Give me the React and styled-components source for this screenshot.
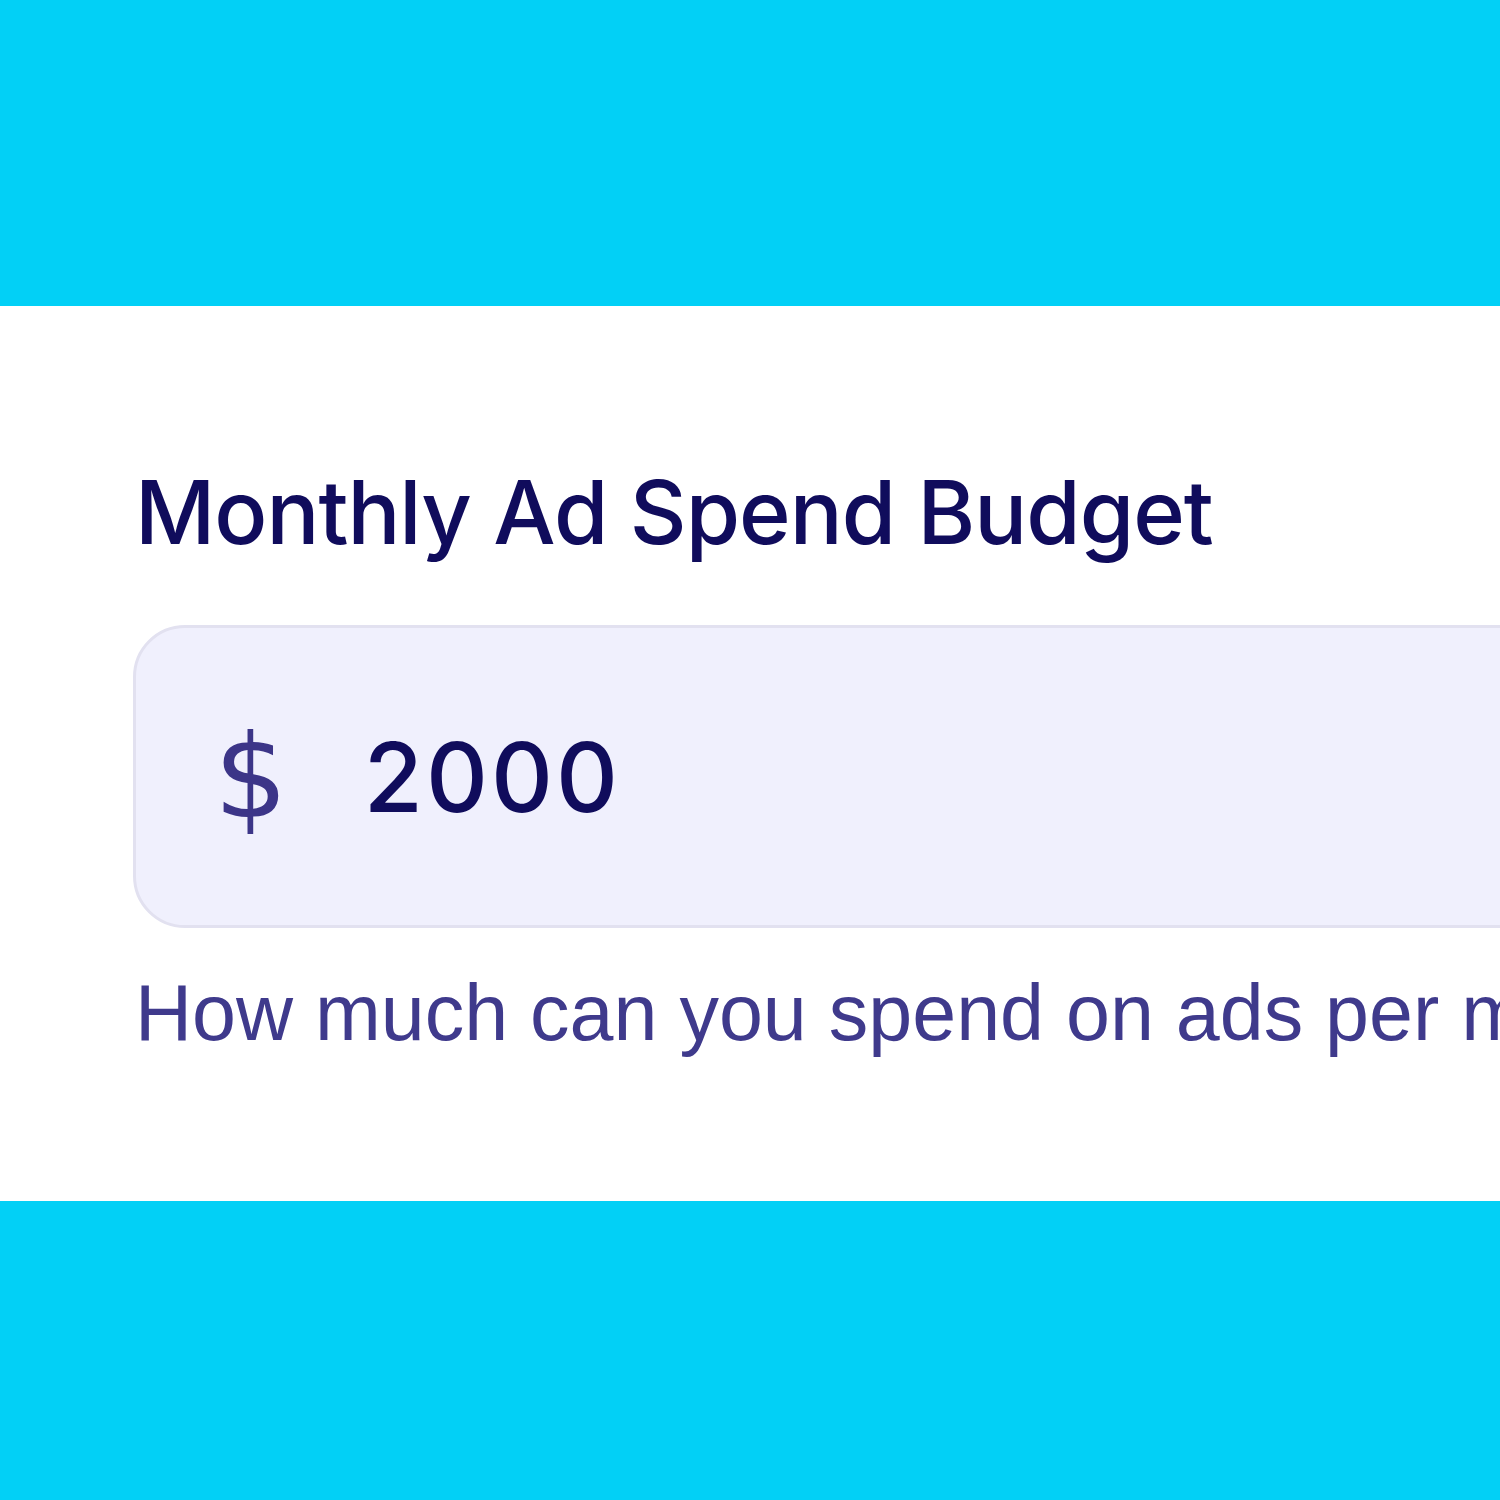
import React from 'react'
import styled, { createGlobalStyle } from 'styled-components'

const GlobalStyle = createGlobalStyle`
  html, body {
    margin: 0;
    padding: 0;
    background: #02d0f6;
  }
`

const Page = styled.div`
  width: 1500px;
  height: 1500px;
  display: flex;
  flex-direction: column;
  padding-top: 306px;
  box-sizing: border-box;
  overflow: hidden;
  background: #02d0f6;
`

const Panel = styled.section`
  height: 895px;
  background: #ffffff;
  padding: 162px 0 0 133px;
  box-sizing: border-box;
  display: flex;
  flex-direction: column;
  overflow: hidden;
`

const Label = styled.label`
  font-family: Inter, 'Noto Sans', sans-serif;
  font-weight: 500;
  font-size: 88px;
  letter-spacing: -1px;
  color: #100c5c;
  line-height: 1;
  margin: 0 0 69px 2px;
  white-space: nowrap;
`

const Field = styled.div`
  width: 1600px;
  height: 303px;
  box-sizing: border-box;
  border: 3px solid #e2e1f0;
  border-radius: 52px;
  background: #f0f0fd;
  display: flex;
  align-items: center;
  padding-left: 78px;
  gap: 76px;
`

const Currency = styled.span`
  font-family: 'DejaVu Sans', sans-serif;
  font-weight: 400;
  font-size: 116px;
  color: #3c3588;
  line-height: 1;
`

const Amount = styled.span`
  font-family: Inter, 'Noto Sans', sans-serif;
  font-weight: 500;
  font-size: 96px;
  letter-spacing: 3px;
  color: #100c5c;
  line-height: 1;
`

const Hint = styled.p`
  font-family: 'Liberation Sans', Arial, sans-serif;
  font-size: 79px;
  color: #3f3a8c;
  margin: 45px 0 0 2px;
  line-height: 1;
  white-space: nowrap;
`

export default function App() {
  return (
    <>
      <GlobalStyle />
      <Page>
        <Panel>
          <Label>Monthly Ad Spend Budget</Label>
          <Field>
            <Currency>$</Currency>
            <Amount>2000</Amount>
          </Field>
          <Hint>How much can you spend on ads per month?</Hint>
        </Panel>
      </Page>
    </>
  )
}
